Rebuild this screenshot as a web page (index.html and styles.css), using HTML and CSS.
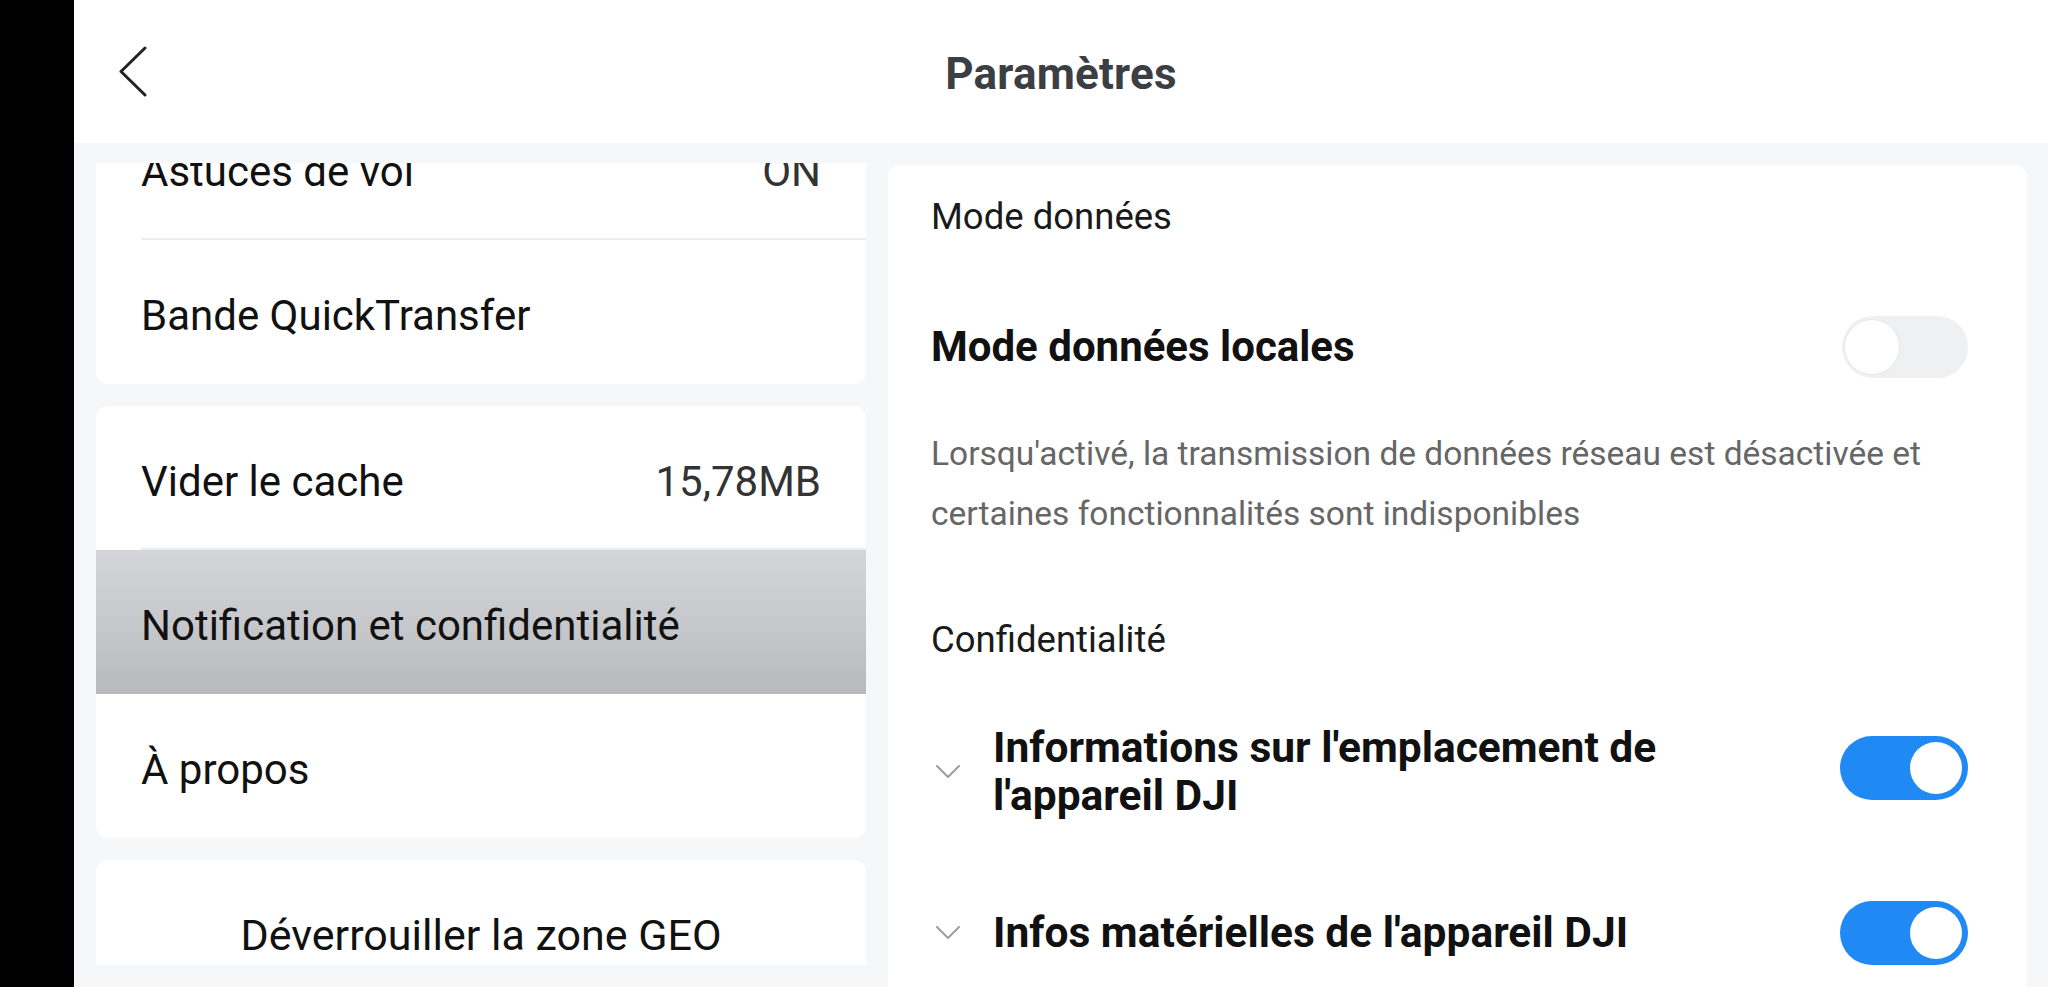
FILE: index.html
```html
<!DOCTYPE html>
<html lang="fr">
<head>
<meta charset="utf-8">
<title>Paramètres</title>
<link rel="stylesheet" href="styles.css">
</head>
<body>
<div class="screen">
  <div class="edge"></div>
  <div class="app">
    <header class="topbar">
      <button class="back" aria-label="Retour">
        <svg width="30" height="51" viewBox="0 0 30 51"><polyline points="27,2 3,25.5 27,49" fill="none" stroke="#222" stroke-width="3" stroke-linecap="round" stroke-linejoin="round"/></svg>
      </button>
      <h1 class="title">Paramètres</h1>
    </header>
    <main class="content">
      <nav class="menu">
        <div class="menu-scroll">
          <div class="card card-first">
            <div class="item divided"><span class="label">Astuces de vol</span><span class="value">ON</span></div>
            <div class="item"><span class="label">Bande QuickTransfer</span></div>
          </div>
          <div class="card">
            <div class="item divided"><span class="label">Vider le cache</span><span class="value">15,78MB</span></div>
            <div class="item active"><span class="label">Notification et confidentialité</span></div>
            <div class="item"><span class="label">À propos</span></div>
          </div>
          <div class="card">
            <div class="item centered"><span class="label">Déverrouiller la zone GEO</span></div>
          </div>
        </div>
      </nav>
      <section class="panel">
        <div class="section-label first">Mode données</div>
        <div class="setting local">
          <span class="setting-title">Mode données locales</span>
          <span class="toggle off"><span class="knob"></span></span>
        </div>
        <p class="desc">Lorsqu'activé, la transmission de données réseau est désactivée et certaines fonctionnalités sont indisponibles</p>
        <div class="section-label second">Confidentialité</div>
        <div class="setting privacy one">
          <svg class="chev" width="26" height="16" viewBox="0 0 26 16"><polyline points="2,2 13,13 24,2" fill="none" stroke="#a0a0a0" stroke-width="2.2" stroke-linecap="round" stroke-linejoin="round"/></svg>
          <span class="setting-title">Informations sur l'emplacement de<br>l'appareil DJI</span>
          <span class="toggle on"><span class="knob"></span></span>
        </div>
        <div class="setting privacy two">
          <svg class="chev" width="26" height="16" viewBox="0 0 26 16"><polyline points="2,2 13,13 24,2" fill="none" stroke="#a0a0a0" stroke-width="2.2" stroke-linecap="round" stroke-linejoin="round"/></svg>
          <span class="setting-title">Infos matérielles de l'appareil DJI</span>
          <span class="toggle on"><span class="knob"></span></span>
        </div>
      </section>
    </main>
  </div>
</div>
</body>
</html>
```

FILE: styles.css
```css
* { box-sizing: border-box; }
html, body { margin: 0; padding: 0; }
body {
  background: #f6f7f9;
  font-family: Roboto, "Noto Sans", "Liberation Sans", sans-serif;
  color: #111;
  overflow: hidden;
}
.screen {
  display: flex;
  width: 2048px;
  height: 987px;
}
.edge {
  width: 74px;
  flex: none;
  background: #000;
}
.app {
  flex: 1;
  display: flex;
  flex-direction: column;
  min-width: 0;
}
.topbar {
  height: 143px;
  flex: none;
  background: #fff;
  display: flex;
  align-items: center;
  justify-content: center;
  position: relative;
}
.back {
  position: absolute;
  left: 44px;
  top: 46px;
  padding: 0;
  border: 0;
  background: none;
  width: 30px;
  height: 51px;
}
.back svg { display: block; }
.title {
  margin: 5px 0 0;
  font-size: 44px;
  font-weight: 700;
  color: #3b3e43;
  letter-spacing: 0.2px;
}
.content {
  flex: 1;
  display: flex;
  gap: 22px;
  padding: 20px 21px 0 22px;
  min-height: 0;
}
.menu {
  width: 770px;
  flex: none;
  height: 802px;
  overflow: hidden;
}
.menu-scroll {
  display: flex;
  flex-direction: column;
  gap: 22px;
  margin-top: -67px;
}
.card {
  background: #fff;
  border-radius: 12px;
  overflow: hidden;
}
.item {
  height: 144px;
  display: flex;
  align-items: center;
  justify-content: space-between;
  padding: 7px 45px 0;
  font-size: 42px;
  color: #111;
  position: relative;
}
.item.divided::after {
  content: "";
  position: absolute;
  left: 45px;
  right: 0;
  bottom: 0;
  height: 2px;
  background: #ebecee;
}
.item .value { color: #333; }
.item.active {
  background: linear-gradient(180deg, #d3d5d8 0%, #c6c7ca 55%, #b8b9bc 100%);
}
.item.centered { justify-content: center; height: 142px; font-size: 43px; }
.panel {
  flex: 1;
  background: #fff;
  border-radius: 12px 12px 0 0;
  margin-top: 2px;
  padding: 0 59px 0 43px;
}
.section-label {
  font-size: 36.5px;
  line-height: 50px;
  color: #1a1a1a;
}
.section-label.first { margin-top: 27px; }
.section-label.second { margin-top: 71px; }
.setting {
  display: flex;
  align-items: center;
}
.setting-title {
  flex: 1;
  font-size: 42.5px;
  font-weight: 700;
  color: #111;
  line-height: 48px;
}
.setting.local { margin-top: 55px; height: 100px; }
.setting.local .setting-title { font-size: 42px; }
.desc {
  margin: 27px 0 0;
  font-size: 33.5px;
  line-height: 60px;
  color: #666;
  max-width: 1040px;
}
.privacy .chev { flex: none; margin: 0 32px 0 4px; display: block; }
.setting.one { margin-top: 59px; height: 96px; }
.setting.one .toggle { margin-bottom: 9px; }
.setting.two { margin-top: 83px; height: 60px; }
.toggle {
  flex: none;
  width: 128px;
  height: 64px;
  border-radius: 32px;
  position: relative;
  display: block;
}
.toggle .knob {
  position: absolute;
  top: 6px;
  width: 52px;
  height: 52px;
  border-radius: 50%;
  background: #fff;
}
.toggle.on { background: #2189f3; }
.toggle.on .knob { right: 6px; }
.toggle.off { background: #eff0f2; height: 62px; width: 126px; }
.toggle.off .knob { left: 2px; top: 3px; width: 56px; height: 56px; border: 1px solid #e6e7e9; }
```
